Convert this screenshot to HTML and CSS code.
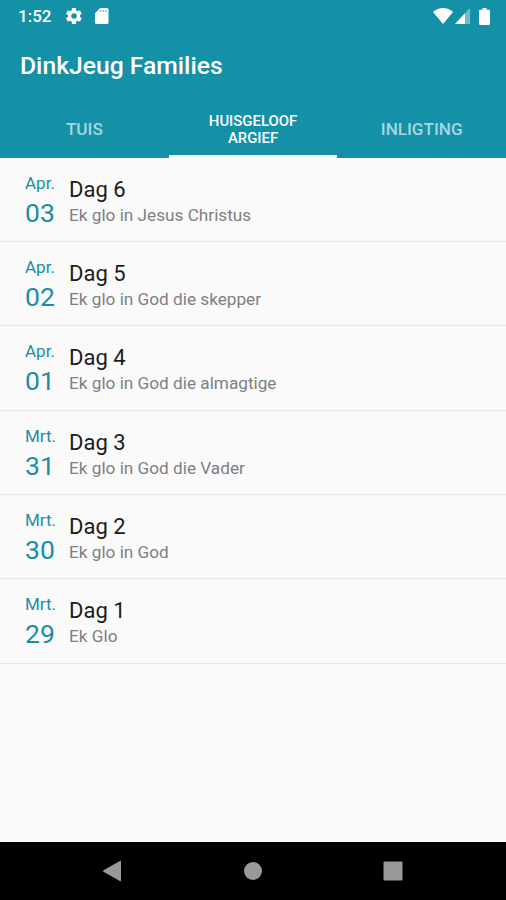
FILE: index.html
```
<!DOCTYPE html>
<html lang="af">
<head>
    <meta charset="UTF-8">
    <meta name="viewport" content="width=device-width, initial-scale=1.0">
    <title>DinkJeug Families</title>
    <link rel="stylesheet" href="styles.css">
</head>
<body>
    <header class="header">
        <div class="statusbar">
            <span class="clock">1:52</span>
            <svg class="icon-gear" viewBox="2 2 20 20"><path d="M19.4 13a7.500 7.500 0 0 0 0-2l2.100-1.600c.2-.2.200-.4.100-.7l-2-3.400c-.1-.2-.4-.3-.6-.2l-2.500 1a7.300 7.300 0 0 0-1.700-1l-.4-2.600a.5.5 0 0 0-.5-.5h-4a.5.5 0 0 0-.5.5L9 5.100a7.300 7.300 0 0 0-1.700 1l-2.400-1c-.3-.1-.5 0-.7.200l-2 3.400c-.1.300 0 .5.200.7L4.600 11a7.500 7.500 0 0 0 0 2l-2.200 1.600c-.2.2-.3.400-.2.700l2 3.400c.2.200.4.300.7.200l2.400-1a7.300 7.300 0 0 0 1.700 1l.4 2.600c0 .3.200.5.5.5h4c.3 0 .5-.2.500-.5l.4-2.600a7.300 7.300 0 0 0 1.700-1l2.500 1c.2.100.5 0 .6-.2l2-3.400c.1-.3.100-.5-.1-.7zM12 15.500a3.500 3.500 0 1 1 0-7 3.500 3.500 0 0 1 0 7z"/></svg>
            <svg class="icon-sd" viewBox="0 0 14 16"><path d="M5.200 0H12a1.500 1.500 0 0 1 1.500 1.500v13A1.500 1.500 0 0 1 12 16H1.500A1.500 1.500 0 0 1 0 14.500V5.200z"/><path class="sd-pins" d="M5 2h1.300v2H5zM7.600 2h1.300v2H7.600zM10.200 2h1.300v2h-1.300z"/></svg>
            <span class="spacer"></span>
            <svg class="icon-wifi" viewBox="0 0 20 16"><path d="M10 16L0 4C3 1.300 6.300 0 10 0s7 1.300 10 4z"/></svg>
            <svg class="icon-signal" viewBox="0 0 15 16"><path class="signal-off" d="M15 0v16H0z"/><path d="M10 5.300V16H0z"/></svg>
            <svg class="icon-battery" viewBox="0 0 11 17"><path d="M3.500 0h4v1.700h2.300c.7 0 1.200.5 1.200 1.200v12.900c0 .7-.5 1.200-1.200 1.200H1.200C.5 17 0 16.500 0 15.800V2.900c0-.7.500-1.200 1.200-1.200h2.300z"/></svg>
        </div>
        <h1 class="title">DinkJeug Families</h1>
        <nav class="tabs">
            <a class="tab">TUIS</a>
            <a class="tab active">HUISGELOOF<br>ARGIEF</a>
            <a class="tab">INLIGTING</a>
        </nav>
    </header>
    <main class="list">
        <div class="item">
            <div class="date"><span class="month">Apr.</span><span class="day">03</span></div>
            <div class="text"><h2>Dag 6</h2><p>Ek glo in Jesus Christus</p></div>
        </div>
        <div class="item">
            <div class="date"><span class="month">Apr.</span><span class="day">02</span></div>
            <div class="text"><h2>Dag 5</h2><p>Ek glo in God die skepper</p></div>
        </div>
        <div class="item">
            <div class="date"><span class="month">Apr.</span><span class="day">01</span></div>
            <div class="text"><h2>Dag 4</h2><p>Ek glo in God die almagtige</p></div>
        </div>
        <div class="item">
            <div class="date"><span class="month">Mrt.</span><span class="day">31</span></div>
            <div class="text"><h2>Dag 3</h2><p>Ek glo in God die Vader</p></div>
        </div>
        <div class="item">
            <div class="date"><span class="month">Mrt.</span><span class="day">30</span></div>
            <div class="text"><h2>Dag 2</h2><p>Ek glo in God</p></div>
        </div>
        <div class="item">
            <div class="date"><span class="month">Mrt.</span><span class="day">29</span></div>
            <div class="text"><h2>Dag 1</h2><p>Ek Glo</p></div>
        </div>
    </main>
    <footer class="navbar">
        <svg viewBox="0 0 22 22"><path d="M19 1.500v19a.8.8 0 0 1-1.200.6L1.500 11.700a.8.8 0 0 1 0-1.400L17.800.9a.8.8 0 0 1 1.200.6z"/></svg>
        <svg viewBox="0 0 22 22"><circle cx="11" cy="11" r="9"/></svg>
        <svg viewBox="0 0 22 22"><rect x="1.500" y="1.500" width="19" height="19" rx="1"/></svg>
    </footer>
</body>
</html>
```
FILE: styles.css
```
* {
    box-sizing: border-box;
}
body {
    margin: 0;
    height: 900px;
    display: flex;
    flex-direction: column;
    font-family: Roboto, sans-serif;
    background-color: #fafafa;
    overflow: hidden;
}
.header {
    height: 157.500px;
    background-color: #1591a7;
    color: white;
}
.statusbar {
    height: 32px;
    padding: 0 16px 0 18px;
    display: flex;
    align-items: center;
}
.statusbar svg {
    fill: white;
}
.clock {
    width: 48px;
    font-size: 17px;
    font-weight: 500;
}
.icon-gear {
    width: 16px;
    height: 16px;
}
.icon-sd {
    width: 14px;
    height: 16px;
    margin-left: 13px;
}
.statusbar .sd-pins {
    fill: #1591a7;
    opacity: 0.6;
}
.spacer {
    flex: 1;
}
.icon-wifi {
    width: 20px;
    height: 16px;
}
.icon-signal {
    width: 15px;
    height: 16px;
    margin-left: 2px;
}
.signal-off {
    opacity: 0.4;
}
.icon-battery {
    width: 11px;
    height: 17px;
    margin-left: 9px;
}
.title {
    margin: 0;
    padding-left: 20px;
    height: 69px;
    line-height: 68px;
    font-size: 24.700px;
    font-weight: 500;
}
.tabs {
    display: flex;
    height: 56.500px;
}
.tab {
    flex: 1;
    display: flex;
    align-items: center;
    justify-content: center;
    text-align: center;
    font-size: 17.100px;
    font-weight: 500;
    color: #a8d6df;
}
.active {
    color: white;
    font-size: 14.900px;
    line-height: 17px;
    padding-top: 4px;
    border-bottom: 3px solid #fafafa;
}
.list {
    flex: 1;
}
.item {
    height: 84.400px;
    display: flex;
    padding-left: 25px;
    border-bottom: 1px solid #e6e6e6;
}
.date {
    width: 44px;
    display: flex;
    flex-direction: column;
    color: #1b8ea4;
}
.month {
    margin-top: 15px;
    font-size: 17px;
    line-height: 20px;
}
.day {
    margin-top: 5px;
    font-size: 26.500px;
    line-height: 30px;
}
.text {
    padding-top: 18px;
}
.text h2 {
    margin: 0;
    font-size: 22px;
    font-weight: 400;
    line-height: 27px;
    color: #1c1c1c;
}
.text p {
    margin: 0;
    font-size: 17.200px;
    line-height: 24px;
    color: #808080;
}
.navbar {
    height: 58.500px;
    padding: 0 102px;
    display: flex;
    justify-content: space-between;
    align-items: center;
    background-color: black;
}
.navbar svg {
    width: 22px;
    height: 22px;
    fill: #999;
}
```
